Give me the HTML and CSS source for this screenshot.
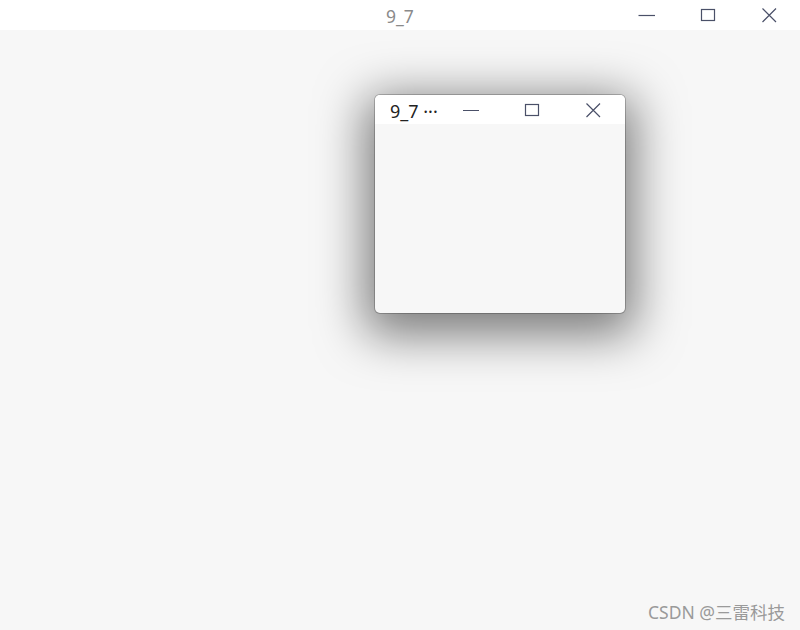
FILE: index.html
```html
<!DOCTYPE html>
<html>
<head>
<meta charset="utf-8">
<link rel="stylesheet" href="styles.css">
</head>
<body>
<div class="app">
  <div class="titlebar">
    <div class="title">9_7</div>
    <div class="controls">
      <span class="btn"><svg width="18" height="18" viewBox="0 0 18 18"><path d="M0.5 9.5H17" stroke="#4a5068" stroke-width="1.2" fill="none"/></svg></span>
      <span class="btn"><svg width="18" height="18" viewBox="0 0 18 18"><rect x="2.5" y="3.5" width="13" height="11" stroke="#4a5068" stroke-width="1.2" fill="none"/></svg></span>
      <span class="btn"><svg width="18" height="18" viewBox="0 0 18 18"><path d="M2.5 2.5L16 16M16 2.5L2.5 16" stroke="#4a5068" stroke-width="1.2" fill="none"/></svg></span>
    </div>
  </div>
  <div class="desk">
    <div class="win">
      <div class="win-bar">
        <div class="win-title">9_7 ···</div>
        <div class="win-controls">
          <span class="wbtn"><svg width="18" height="18" viewBox="0 0 18 18"><path d="M1 9.5H17" stroke="#4a5068" stroke-width="1.2" fill="none"/></svg></span>
          <span class="wbtn"><svg width="18" height="18" viewBox="0 0 18 18"><rect x="2.5" y="3.5" width="13" height="11" stroke="#4a5068" stroke-width="1.2" fill="none"/></svg></span>
          <span class="wbtn"><svg width="18" height="18" viewBox="0 0 18 18"><path d="M2.5 2.5L16 16M16 2.5L2.5 16" stroke="#4a5068" stroke-width="1.2" fill="none"/></svg></span>
        </div>
      </div>
      <div class="win-body"></div>
    </div>
    <div class="watermark">CSDN @三雷科技</div>
  </div>
</div>
</body>
</html>
```

FILE: styles.css
```css
html, body {
  margin: 0;
  padding: 0;
  width: 800px;
  height: 630px;
  overflow: hidden;
  background: #f7f7f7;
  font-family: "Noto Sans", "Noto Sans CJK SC", sans-serif;
}
.app {
  display: flex;
  flex-direction: column;
  width: 800px;
  height: 630px;
}
.titlebar {
  height: 30px;
  background: #ffffff;
  position: relative;
  display: flex;
  align-items: center;
  justify-content: center;
  flex: none;
}
.title {
  color: #8a8a8a;
  font-size: 17.5px;
  line-height: 30px;
  padding-top: 2px;
}
.controls {
  position: absolute;
  right: 22px;
  top: 6px;
  display: flex;
  gap: 43px;
}
.btn {
  width: 18px;
  height: 18px;
  display: block;
}
.btn svg { display: block; }
.desk {
  flex: 1;
  position: relative;
  background: #f7f7f7;
}
.win {
  position: absolute;
  left: 375px;
  top: 65px;
  width: 250px;
  height: 218px;
  border-radius: 5px;
  background: #f7f7f7;
  box-shadow: 0 0 0 1px rgba(0,0,0,0.22), 0 12px 48px 10px rgba(0,0,0,0.5);
  display: flex;
  flex-direction: column;
  overflow: hidden;
}
.win-bar {
  height: 29px;
  background: #ffffff;
  display: flex;
  align-items: center;
  flex: none;
}
.win-title {
  margin-left: 15px;
  width: 72px;
  font-size: 18px;
  color: #222;
  white-space: nowrap;
  padding-top: 2px;
}
.win-controls {
  display: flex;
  gap: 43px;
  margin-left: 0;
}
.wbtn { width: 18px; height: 18px; display: block; }
.wbtn svg { display: block; }
.win-body { flex: 1; }
.watermark {
  position: absolute;
  right: 15px;
  bottom: 6px;
  font-size: 17.5px;
  color: #9a9a9a;
}
```
